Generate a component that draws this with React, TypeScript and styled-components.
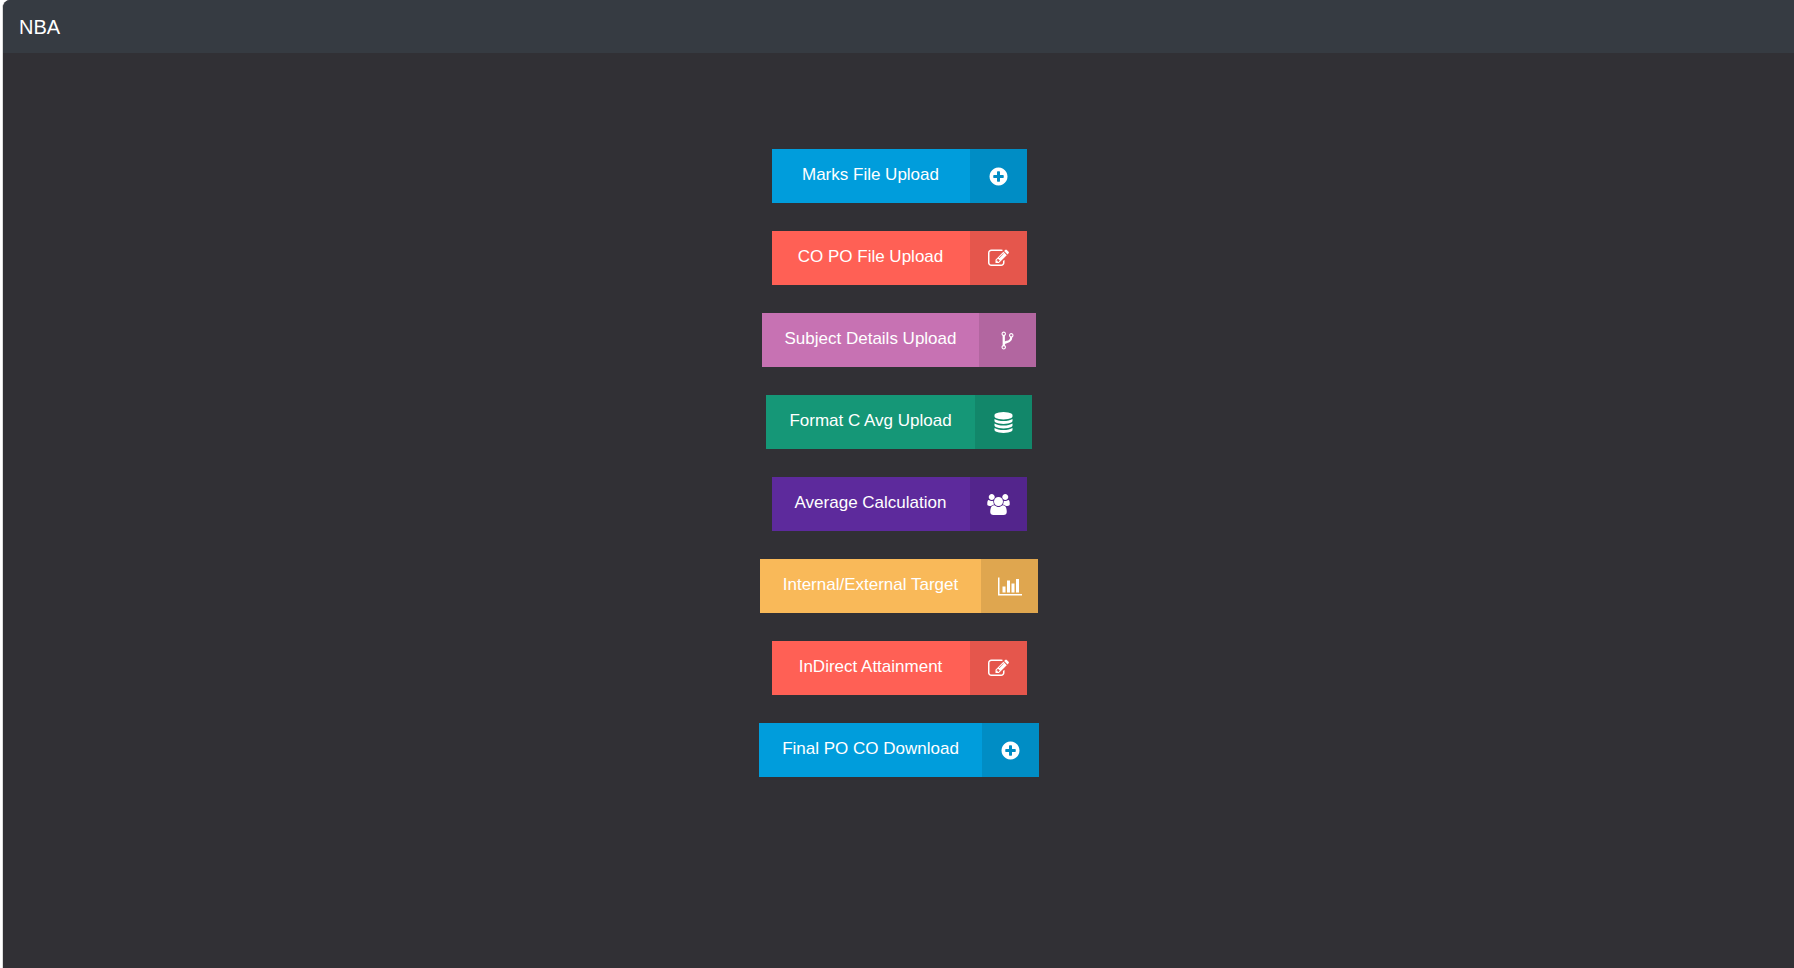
import React from "react";
import styled, { createGlobalStyle } from "styled-components";

const GlobalStyle = createGlobalStyle`
  *, *::before, *::after { box-sizing: border-box; }
  body {
    margin: 0;
    background: #fff;
    color: #fff;
    font-family: "Liberation Sans", Arial, sans-serif;
  }
`;

const Page = styled.div`
  display: flex;
  flex-direction: column;
  min-height: 100vh;
  margin-left: 2px;
  background: #313035;
  border-left: 1px solid #dcdcdc;
  border-top-left-radius: 8px;
  overflow: hidden;
`;

const Header = styled.header`
  display: flex;
  align-items: center;
  height: 53px;
  padding: 0 16px;
  background: #363b42;
`;

const Brand = styled.a`
  color: #fff;
  font-size: 20px;
  line-height: 30px;
  text-decoration: none;
`;

const Menu = styled.main`
  display: flex;
  flex-direction: column;
  align-items: center;
  gap: 28px;
  padding: 96px 15px 96px 16px;
`;

const ActionButton = styled.button<{ $color: string }>`
  display: flex;
  align-items: stretch;
  min-width: 255px;
  height: 54px;
  padding: 0;
  border: 0;
  background: ${(p) => p.$color};
  color: #fff;
  font-family: inherit;
  font-size: 17px;
  line-height: 20px;
  cursor: pointer;
`;

const Label = styled.span`
  flex: 1;
  padding: 16px 23px 18px;
  text-align: center;
  white-space: nowrap;
`;

const IconBox = styled.span`
  display: flex;
  align-items: center;
  justify-content: center;
  width: 57px;
  background: rgba(0, 0, 0, 0.1);
`;

const Glyph = styled.svg`
  display: block;
  height: 21px;
  fill: currentColor;
`;

type IconName = "plus" | "edit" | "fork" | "database" | "group" | "chart";

const icons: Record<IconName, { box: string; width: number; d: string }> = {
  plus: {
    box: "0 0 1792 1792",
    width: 21,
    d: "M1344 960v-128q0-26-19-45t-45-19h-256v-256q0-26-19-45t-45-19h-128q-26 0-45 19t-19 45v256h-256q-26 0-45 19t-19 45v128q0 26 19 45t45 19h256v256q0 26 19 45t45 19h128q26 0 45-19t19-45v-256h256q26 0 45-19t19-45zm320-64q0 209-103 385.5t-279.5 279.5-385.5 103-385.5-103-279.5-279.5-103-385.5 103-385.5 279.5-279.5 385.5-103 385.5 103 279.5 279.5 103 385.5z",
  },
  edit: {
    box: "0 0 1792 1792",
    width: 21,
    d: "M888 1184l116-116-152-152-116 116v56h96v96h56zm440-720q-16-16-33 1l-350 350q-17 17-1 33t33-1l350-350q17-17 1-33zm80 594v190q0 119-84.5 203.5t-203.5 84.5h-832q-119 0-203.5-84.5t-84.5-203.5v-832q0-119 84.5-203.5t203.5-84.5h832q63 0 117 25 15 7 18 23 3 17-9 29l-49 49q-14 14-32 8-23-6-45-6h-832q-66 0-113 47t-47 113v832q0 66 47 113t113 47h832q66 0 113-47t47-113v-126q0-13 9-22l64-64q15-15 35-7t20 29zm-96-738l288 288-672 672h-288v-288zm444 132l-92 92-288-288 92-92q28-28 68-28t68 28l152 152q28 28 28 68t-28 68z",
  },
  fork: {
    box: "0 0 1792 1792",
    width: 21,
    d: "M672 1472q0-40-28-68t-68-28-68 28-28 68 28 68 68 28 68-28 28-68zm0-1152q0-40-28-68t-68-28-68 28-28 68 28 68 68 28 68-28 28-68zm640 128q0-40-28-68t-68-28-68 28-28 68 28 68 68 28 68-28 28-68zm96 0q0 52-26 96.5t-70 69.5q-2 287-226 414-67 38-203 81-128 40-169.5 71t-41.5 100v26q44 25 70 69.5t26 96.5q0 80-56 136t-136 56-136-56-56-136q0-52 26-96.5t70-69.5v-820q-44-25-70-69.5t-26-96.5q0-80 56-136t136-56 136 56 56 136q0 52-26 96.5t-70 69.5v497q54-26 154-57 55-17 87.5-29.5t70.5-31 59-39.5 40.5-51 28-69.5 8.5-91.5q-44-25-70-69.5t-26-96.5q0-80 56-136t136-56 136 56 56 136z",
  },
  database: {
    box: "0 0 1792 1792",
    width: 21,
    d: "M896 768q237 0 443-43t325-127v170q0 69-103 128t-280 93.5-385 34.5-385-34.5-280-93.5-103-128v-170q119 84 325 127t443 43zm0 768q237 0 443-43t325-127v170q0 69-103 128t-280 93.5-385 34.5-385-34.5-280-93.5-103-128v-170q119 84 325 127t443 43zm0-384q237 0 443-43t325-127v170q0 69-103 128t-280 93.5-385 34.5-385-34.5-280-93.5-103-128v-170q119 84 325 127t443 43zm0-1152q208 0 385 34.5t280 93.5 103 128v128q0 69-103 128t-280 93.5-385 34.5-385-34.5-280-93.5-103-128v-128q0-69 103-128t280-93.5 385-34.5z",
  },
  group: {
    box: "-64 0 1920 1792",
    width: 23,
    d: "M529 896q-162 5-265 128h-134q-82 0-138-40.5t-56-118.5q0-353 124-353 6 0 43.5 21t97.5 42.5 119 21.5q67 0 133-23-5 37-5 66 0 139 81 256zm1071 637q0 120-73 189.5t-194 69.5h-874q-121 0-194-69.5t-73-189.5q0-53 3.5-103.5t14-109 26.5-108.5 43-97.5 62-81 85.5-53.5 111.5-20q10 0 43 21.5t73 48 107 48 135 21.5 135-21.5 107-48 73-48 43-21.5q61 0 111.5 20t85.5 53.5 62 81 43 97.5 26.5 108.5 14 109 3.5 103.5zm-1024-1277q0 106-75 181t-181 75-181-75-75-181 75-181 181-75 181 75 75 181zm704 384q0 159-112.5 271.5t-271.5 112.5-271.5-112.5-112.5-271.5 112.5-271.5 271.5-112.5 271.5 112.5 112.5 271.5zm576 225q0 78-56 118.5t-138 40.5h-134q-103-123-265-128 81-117 81-256 0-29-5-66 66 23 133 23 59 0 119-21.5t97.5-42.5 43.5-21q124 0 124 353zm-128-609q0 106-75 181t-181 75-181-75-75-181 75-181 181-75 181 75 75 181z",
  },
  chart: {
    box: "0 0 2048 1792",
    width: 24,
    d: "M640 896v512h-256v-512h256zm384-512v1024h-256v-1024h256zm1024 1152v128h-2048v-1536h128v1408h1920zm-640-896v768h-256v-768h256zm384-384v1152h-256v-1152h256z",
  },
};

const actions: { label: string; color: string; icon: IconName }[] = [
  { label: "Marks File Upload", color: "#009ddc", icon: "plus" },
  { label: "CO PO File Upload", color: "#ff6055", icon: "edit" },
  { label: "Subject Details Upload", color: "#c772b3", icon: "fork" },
  { label: "Format C Avg Upload", color: "#159777", icon: "database" },
  { label: "Average Calculation", color: "#5d2a9c", icon: "group" },
  { label: "Internal/External Target", color: "#f9b959", icon: "chart" },
  { label: "InDirect Attainment", color: "#ff6055", icon: "edit" },
  { label: "Final PO CO Download", color: "#009ddc", icon: "plus" },
];

export default function App() {
  return (
    <>
      <GlobalStyle />
      <Page>
        <Header>
          <Brand href="#">NBA</Brand>
        </Header>
        <Menu>
          {actions.map(({ label, color, icon }) => (
            <ActionButton key={label} type="button" $color={color}>
              <Label>{label}</Label>
              <IconBox>
                <Glyph viewBox={icons[icon].box} width={icons[icon].width} aria-hidden="true">
                  <path d={icons[icon].d} />
                </Glyph>
              </IconBox>
            </ActionButton>
          ))}
        </Menu>
      </Page>
    </>
  );
}
